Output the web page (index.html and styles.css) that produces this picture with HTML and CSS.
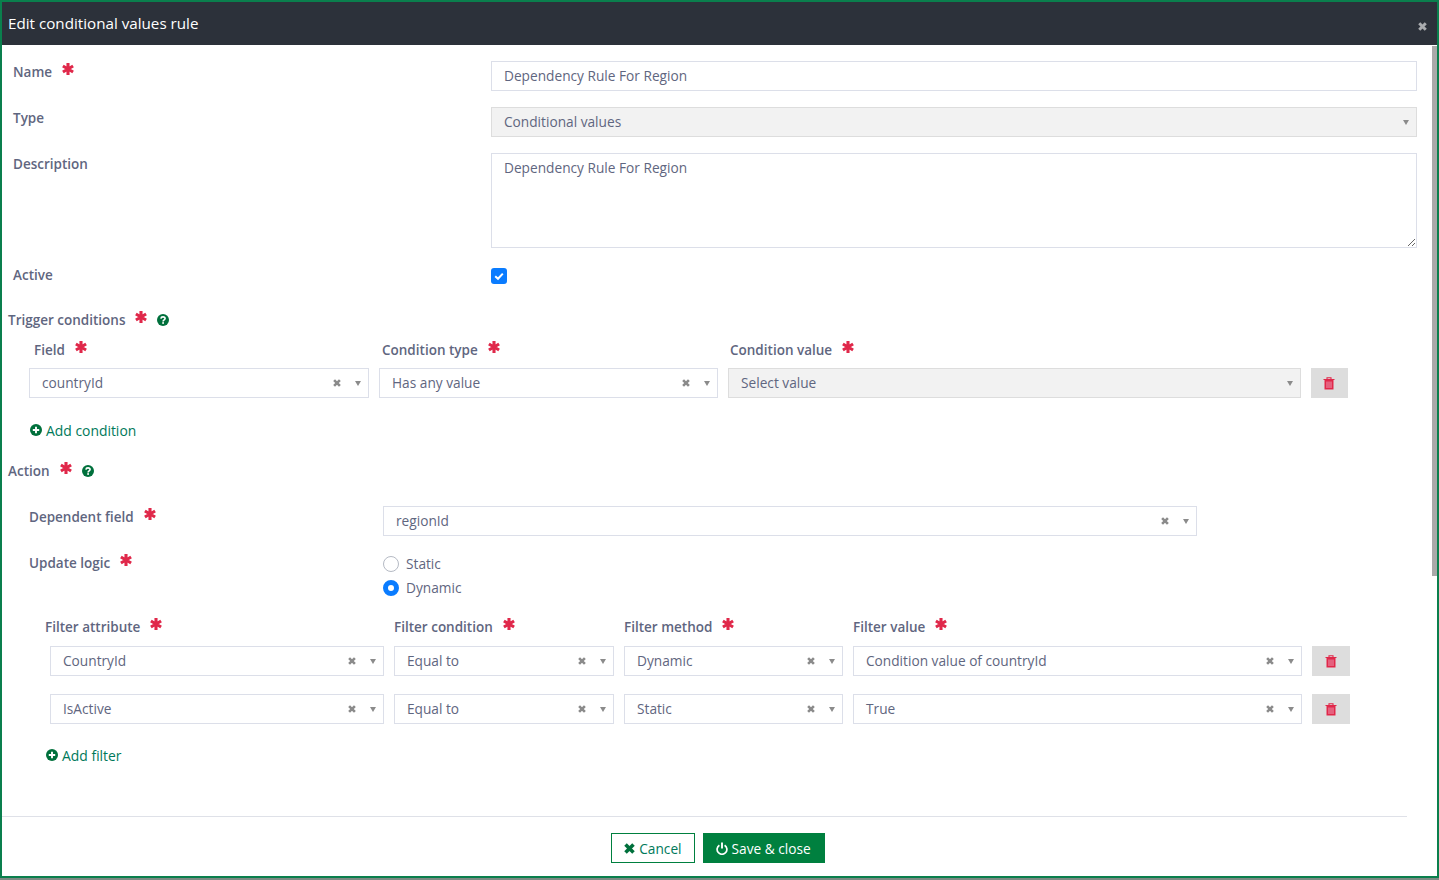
FILE: index.html
```html
<!DOCTYPE html>
<html lang="en">
<head>
<meta charset="UTF-8">
<meta name="viewport" content="width=device-width, initial-scale=1.0">
<title>Edit conditional values rule</title>
<link rel="stylesheet" href="styles.css">
</head>
<body>
<svg class="sprites" width="0" height="0">
    <symbol id="i-star" viewBox="0 0 12 12"><path d="M6 0V12M0.9 3L11.1 9M11.1 3L0.9 9" fill="none" stroke="currentColor" stroke-width="3.1"/></symbol>
    <symbol id="i-help" viewBox="0 0 12 12"><circle cx="6" cy="6" r="6" fill="currentColor"/><path d="M3.9 4.6C4 3.4 4.9 2.9 6 2.9C7.2 2.9 8.1 3.6 8.1 4.6C8.1 6 6.1 5.9 6.1 7.4" fill="none" stroke="#fff" stroke-width="1.6"/><rect x="5.2" y="8.2" width="1.8" height="1.6" fill="#fff"/></symbol>
    <symbol id="i-plus" viewBox="0 0 12 12"><circle cx="6" cy="6" r="6" fill="currentColor"/><path d="M6 2.8V9.2M2.8 6H9.2" stroke="#fff" stroke-width="1.9"/></symbol>
    <symbol id="i-x" viewBox="0 0 8 8"><path d="M1.1 1.1L6.9 6.9M6.9 1.1L1.1 6.9" fill="none" stroke="currentColor" stroke-width="2.6"/></symbol>
    <symbol id="i-caret" viewBox="0 0 6 5"><path d="M0 0H6L3 5Z" fill="currentColor"/></symbol>
    <symbol id="i-trash" viewBox="0 0 12 13"><path d="M0.5 2.5H11.5M4 2.5V0.8H8V2.5" fill="none" stroke="currentColor" stroke-width="1.1"/><path d="M1.5 3H10.5V12.5H1.5Z" fill="currentColor"/><path d="M4 4.5V11M6 4.5V11M8 4.5V11" stroke="#eba6bd" stroke-width="0.9"/></symbol>
    <symbol id="i-power" viewBox="0 0 12 13"><path d="M3.4 3.2A4.9 4.9 0 1 0 8.6 3.2" fill="none" stroke="currentColor" stroke-width="1.7"/><path d="M6 0.5V6.5" stroke="currentColor" stroke-width="1.9"/></symbol>
</svg>

<div class="modal">
    <div class="modal_head">
        <h1>Edit conditional values rule</h1>
        <svg class="ico_close"><use href="#i-x"/></svg>
    </div>

    <div class="modal_body">
        <div class="scroll_thumb"></div>

        <div class="form_row">
            <label class="lbl">Name <svg class="star"><use href="#i-star"/></svg></label>
            <input class="text_input" type="text" value="Dependency Rule For Region">
        </div>
        <div class="form_row">
            <label class="lbl">Type</label>
            <div class="select disabled"><span class="val">Conditional values</span><svg class="caret"><use href="#i-caret"/></svg></div>
        </div>
        <div class="form_row">
            <label class="lbl lbl_top">Description</label>
            <textarea class="text_area">Dependency Rule For Region</textarea>
        </div>
        <div class="form_row active_row">
            <label class="lbl">Active</label>
            <span class="checkbox"><svg viewBox="0 0 16 16"><path d="M4.2 8.2L7 10.8L11.8 5.6" fill="none" stroke="#fff" stroke-width="2"/></svg></span>
        </div>

        <div class="section_title trigger_title">Trigger conditions <svg class="star"><use href="#i-star"/></svg><svg class="help"><use href="#i-help"/></svg></div>

        <div class="trigger_grid">
            <label class="lbl col_a">Field <svg class="star"><use href="#i-star"/></svg></label>
            <label class="lbl col_b">Condition type <svg class="star"><use href="#i-star"/></svg></label>
            <label class="lbl col_c">Condition value <svg class="star"><use href="#i-star"/></svg></label>
            <span></span>
            <div class="select"><span class="val">countryId</span><svg class="clear"><use href="#i-x"/></svg><svg class="caret"><use href="#i-caret"/></svg></div>
            <div class="select"><span class="val">Has any value</span><svg class="clear"><use href="#i-x"/></svg><svg class="caret"><use href="#i-caret"/></svg></div>
            <div class="select disabled"><span class="val">Select value</span><svg class="caret"><use href="#i-caret"/></svg></div>
            <button class="btn_trash"><svg><use href="#i-trash"/></svg></button>
        </div>

        <a class="add_link add_condition"><svg><use href="#i-plus"/></svg>Add condition</a>

        <div class="section_title action_title">Action <svg class="star"><use href="#i-star"/></svg><svg class="help"><use href="#i-help"/></svg></div>

        <div class="action_row dep_row">
            <label class="lbl">Dependent field <svg class="star"><use href="#i-star"/></svg></label>
            <div class="select"><span class="val">regionId</span><svg class="clear"><use href="#i-x"/></svg><svg class="caret"><use href="#i-caret"/></svg></div>
        </div>
        <div class="action_row logic_row">
            <label class="lbl">Update logic <svg class="star"><use href="#i-star"/></svg></label>
            <div class="radios">
                <div class="radio_item"><span class="radio"></span>Static</div>
                <div class="radio_item"><span class="radio on"></span>Dynamic</div>
            </div>
        </div>

        <div class="filter_grid">
            <label class="lbl col_first">Filter attribute <svg class="star"><use href="#i-star"/></svg></label>
            <label class="lbl">Filter condition <svg class="star"><use href="#i-star"/></svg></label>
            <label class="lbl">Filter method <svg class="star"><use href="#i-star"/></svg></label>
            <label class="lbl">Filter value <svg class="star"><use href="#i-star"/></svg></label>
            <span></span>

            <div class="select"><span class="val">CountryId</span><svg class="clear"><use href="#i-x"/></svg><svg class="caret"><use href="#i-caret"/></svg></div>
            <div class="select"><span class="val">Equal to</span><svg class="clear"><use href="#i-x"/></svg><svg class="caret"><use href="#i-caret"/></svg></div>
            <div class="select"><span class="val">Dynamic</span><svg class="clear"><use href="#i-x"/></svg><svg class="caret"><use href="#i-caret"/></svg></div>
            <div class="select"><span class="val">Condition value of countryId</span><svg class="clear"><use href="#i-x"/></svg><svg class="caret"><use href="#i-caret"/></svg></div>
            <button class="btn_trash"><svg><use href="#i-trash"/></svg></button>

            <div class="select"><span class="val">IsActive</span><svg class="clear"><use href="#i-x"/></svg><svg class="caret"><use href="#i-caret"/></svg></div>
            <div class="select"><span class="val">Equal to</span><svg class="clear"><use href="#i-x"/></svg><svg class="caret"><use href="#i-caret"/></svg></div>
            <div class="select"><span class="val">Static</span><svg class="clear"><use href="#i-x"/></svg><svg class="caret"><use href="#i-caret"/></svg></div>
            <div class="select"><span class="val">True</span><svg class="clear"><use href="#i-x"/></svg><svg class="caret"><use href="#i-caret"/></svg></div>
            <button class="btn_trash"><svg><use href="#i-trash"/></svg></button>
        </div>

        <a class="add_link add_filter"><svg><use href="#i-plus"/></svg>Add filter</a>

        <div class="modal_foot">
            <button class="btn btn_cancel"><svg class="ico_x"><use href="#i-x"/></svg>Cancel</button>
            <button class="btn btn_save"><svg class="ico_power"><use href="#i-power"/></svg>Save &amp; close</button>
        </div>
    </div>
</div>
</body>
</html>
```

FILE: styles.css
```css
* {margin: 0; padding: 0; box-sizing: border-box;}
html, body {height: 100%; overflow: hidden;}
body {
    font-family: "Open Sans", "Liberation Sans", sans-serif;
    font-size: 13.7px;
    color: #5f6680;
    background: #fff;
}
.sprites {position: absolute;}

.modal {
    height: 878px;
    border: 2px solid #0a7f4d;
    box-shadow: 0 2px 0 #7c8a84;
    display: flex;
    flex-direction: column;
}
.modal_head {
    height: 43px;
    flex: none;
    background: #2c313a;
    color: #fff;
    display: flex;
    align-items: center;
    justify-content: space-between;
    padding: 0 10px 0 6px;
}
.modal_head h1 {
    font-size: 15.2px;
    font-weight: 400;
    margin-top: -1px;
}
.ico_close {width: 9px; height: 9px; color: #a9abae; margin-top: 5px;}

.modal_body {
    flex: 1;
    position: relative;
    padding-top: 16px;
}
.scroll_thumb {
    position: absolute;
    top: 1px;
    right: 0;
    width: 5px;
    height: 530px;
    background: #a9a9a9;
}

.lbl {
    display: inline-flex;
    align-items: center;
    font-size: 13.5px;
    font-weight: 600;
    height: 20px;
    white-space: nowrap;
}
.star {
    width: 12px;
    height: 12px;
    color: #e0284a;
    margin: 0 0 6px 10px;
    flex: none;
}
.help {
    width: 12px;
    height: 12px;
    color: #00703c;
    margin-left: 10px;
    flex: none;
}

.form_row {
    display: grid;
    grid-template-columns: 478px 926px;
    margin: 0 0 16px 11px;
}
.form_row .lbl {margin-top: 1px;}
.active_row {margin-top: 20px; margin-bottom: 25px;}
.form_row.active_row .lbl {margin-top: -3px;}

.text_input, .text_area {
    display: block;
    width: 926px;
    border: 1px solid #dcdfe9;
    font: inherit;
    color: #5f6680;
    padding: 0 12px;
    outline: none;
}
.text_input {height: 30px; padding-bottom: 2px;}
.text_area {height: 95px; padding-top: 4px; resize: both;}

.checkbox {
    width: 16px;
    height: 16px;
    border-radius: 3px;
    background: #0a7cff;
    display: block;
}
.checkbox svg {display: block; width: 16px; height: 16px;}

.select {
    height: 30px;
    border: 1px solid #dcdfe9;
    background: #fff;
    display: flex;
    align-items: center;
    padding: 0 7px 0 12px;
    min-width: 0;
}
.select .val {flex: 1; white-space: nowrap; margin-bottom: 1px;}
.select .clear {width: 8px; height: 8px; color: #8b8b8b; margin-right: 14px; flex: none;}
.select .caret {width: 6px; height: 5px; color: #8b8b8b; flex: none;}
.select.disabled {background: #f2f2f2; border-color: #dddddd;}

.section_title {
    display: flex;
    align-items: center;
    font-size: 13.5px;
    font-weight: 600;
    height: 20px;
    margin-left: 6px;
}

.trigger_grid {
    display: grid;
    grid-template-columns: 340px 339px 573px 37px;
    column-gap: 10px;
    row-gap: 8px;
    margin: 10px 0 0 27px;
}
.col_a {margin-left: 5px;}
.col_b {margin-left: 3px;}
.col_c {margin-left: 2px;}

.btn_trash {
    height: 30px;
    border: 0;
    background: #dddddd;
    display: flex;
    align-items: center;
    justify-content: center;
    color: #e0284a;
}
.btn_trash svg {width: 12px; height: 13px; margin: 1px 1px 0 0;}

.add_link {
    display: flex;
    align-items: center;
    height: 20px;
    font-size: 13.9px;
    color: #00795a;
}
.add_link svg {width: 12px; height: 12px; color: #00703c; margin-right: 4px;}
.add_condition {margin: 22px 0 0 28px;}
.add_filter {margin: 21px 0 0 44px;}

.action_title {margin-top: 21px;}

.action_row {
    display: grid;
    grid-template-columns: 354px 814px;
    margin-left: 27px;
}
.dep_row {margin-top: 25px;}
.dep_row .lbl {margin-top: 1px;}
.logic_row {margin-top: 16px;}
.logic_row .lbl {margin-top: 1px;}

.radio_item {
    display: flex;
    align-items: center;
    height: 24px;
    padding-bottom: 2px;
}
.radio {
    width: 16px;
    height: 16px;
    border-radius: 50%;
    border: 1px solid #b5bac4;
    margin: 2px 7px 0 0;
}
.radio.on {border: 5px solid #0a7cff;}

.filter_grid {
    display: grid;
    grid-template-columns: 334px 220px 219px 449px 38px;
    column-gap: 10px;
    row-gap: 18px;
    margin: 17px 0 0 48px;
}
.filter_grid .lbl {margin-bottom: -9px;}
.col_first {margin-left: -5px;}

.modal_foot {
    position: absolute;
    left: 0;
    right: 30px;
    bottom: 13px;
    border-top: 1px solid #dfe1e8;
    padding: 16px 0 0 27px;
    display: flex;
    justify-content: center;
    gap: 8px;
}
.btn {
    height: 30px;
    font: inherit;
    display: flex;
    align-items: center;
    padding: 0 12px;
    border: 1px solid #00803f;
    background: #fff;
    color: #00795a;
}
.btn_save {background: #00803f; color: #fff; padding-right: 13px;}
.ico_x {width: 11px; height: 11px; margin-right: 4px; color: #00703c;}
.ico_power {width: 12px; height: 13px; margin-right: 4px;}
```
